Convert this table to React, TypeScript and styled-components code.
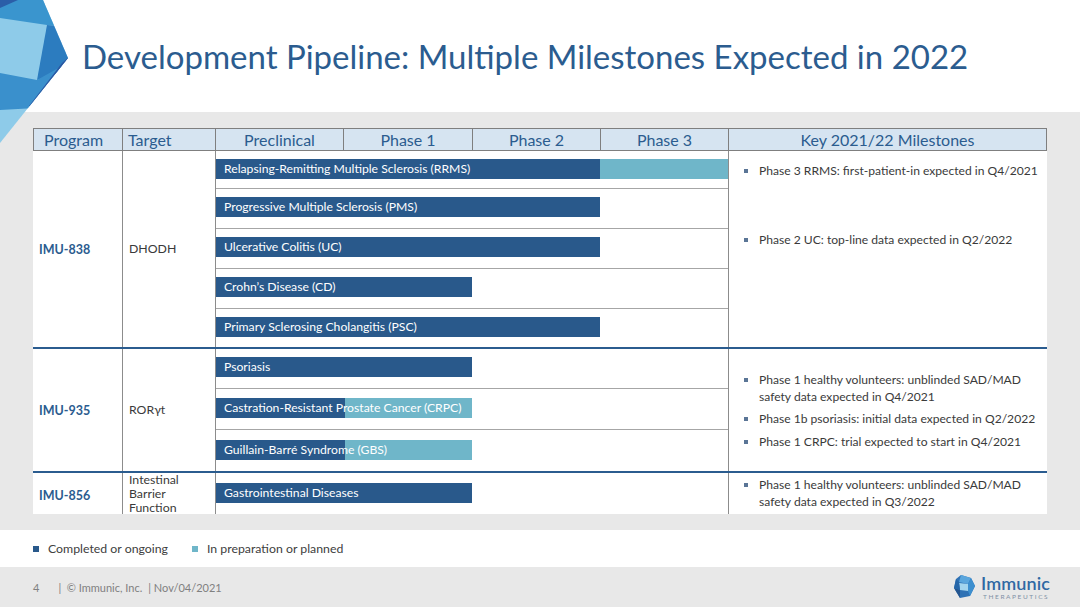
import React from "react";
import styled, { createGlobalStyle } from "styled-components";

const COLS = "89px 93px 128px 129px 128px 128px 319px";
const DARK = "#29598b";
const LIGHT = "#6fb6c9";
const BLUE_TEXT = "#2b5c8f";
const RULE = "#8c8c8c";

const GlobalStyle = createGlobalStyle`
  html, body { margin: 0; padding: 0; background: #fff; }
  body { font-family: Lato, "Open Sans", "Liberation Sans", sans-serif; }
  #root { width: 1080px; height: 607px; }
`;

const Slide = styled.div`
  position: relative;
  width: 1080px;
  height: 607px;
  overflow: hidden;
  display: flex;
  flex-direction: column;
  background: #fff;
`;

const Deco = styled.svg`
  position: absolute;
  left: 0;
  top: 0;
  z-index: 2;
`;

const TitleBar = styled.header`
  height: 112px;
  flex: none;
  box-sizing: border-box;
  padding: 36px 0 0 82px;
`;

const Title = styled.h1`
  margin: 0;
  font-size: 33px;
  line-height: 40px;
  font-weight: 400;
  color: ${BLUE_TEXT};
  letter-spacing: 0;
  white-space: nowrap;
`;

const Stage = styled.main`
  height: 418px;
  flex: none;
  box-sizing: border-box;
  background: #e8e8e8;
  padding: 16px 33px 0;
`;

const Table = styled.div`
  height: 386px;
  overflow: hidden;
  background: #fff;
  display: flex;
  flex-direction: column;
`;

const HeaderRow = styled.div`
  display: grid;
  grid-template-columns: ${COLS};
  height: 23px;
  flex: none;
`;

const HeadCell = styled.div<{ $align?: string; $pad?: number; $last?: boolean }>`
  box-sizing: border-box;
  background: #d6e4f1;
  border-top: 1px solid #7f7f7f;
  border-bottom: 1px solid #7f7f7f;
  border-left: 1px solid #7f7f7f;
  border-right: ${(p) => (p.$last ? "1px solid #7f7f7f" : "none")};
  display: flex;
  align-items: center;
  justify-content: ${(p) => p.$align ?? "center"};
  padding-left: ${(p) => p.$pad ?? 0}px;
  padding-bottom: 1px;
  font-size: 16px;
  color: ${BLUE_TEXT};
  white-space: nowrap;
`;

const Group = styled.section<{ $divider?: boolean; $height: number }>`
  display: grid;
  grid-template-columns: ${COLS};
  flex: none;
  height: ${(p) => p.$height}px;
  border-top: ${(p) => (p.$divider ? `2px solid ${BLUE_TEXT}` : "none")};
`;

const ProgramCell = styled.div`
  display: flex;
  align-items: center;
  padding-left: 6px;
  font-size: 12.5px;
  font-weight: 700;
  color: ${BLUE_TEXT};
`;

const TargetCell = styled.div<{ $top?: boolean }>`
  border-left: 1px solid ${RULE};
  display: flex;
  align-items: ${(p) => (p.$top ? "flex-start" : "center")};
  padding-left: 6px;
  font-size: 12.3px;
  line-height: 14px;
  color: #3a3a3a;
`;

const BarsCell = styled.div`
  grid-column: span 4;
  border-left: 1px solid ${RULE};
  display: flex;
  flex-direction: column;
`;

const BarRow = styled.div<{ $h: number; $pad: number; $first: boolean }>`
  box-sizing: border-box;
  height: ${(p) => p.$h}px;
  flex: none;
  padding-top: ${(p) => p.$pad}px;
  border-top: ${(p) => (p.$first ? "none" : "1px solid #a6a6a6")};
`;

const Bar = styled.div<{ $done: number; $total: number }>`
  box-sizing: border-box;
  width: ${(p) => p.$total}px;
  height: 20px;
  padding-left: 8px;
  background: linear-gradient(
    to right,
    ${DARK} 0,
    ${DARK} ${(p) => p.$done}px,
    ${LIGHT} ${(p) => p.$done}px,
    ${LIGHT} 100%
  );
  color: #fff;
  font-size: 12.2px;
  line-height: 20px;
  white-space: nowrap;
`;

const Milestones = styled.ul<{ $center?: boolean; $pt: number }>`
  list-style: none;
  margin: 0;
  box-sizing: border-box;
  border-left: 1px solid ${RULE};
  padding: ${(p) => p.$pt}px 0 0 15px;
  display: flex;
  flex-direction: column;
  justify-content: ${(p) => (p.$center ? "center" : "flex-start")};
`;

const Milestone = styled.li<{ $mt: number }>`
  display: flex;
  align-items: flex-start;
  gap: 11px;
  margin-top: ${(p) => p.$mt}px;
  font-size: 12.1px;
  line-height: 17px;
  color: #3a3a3a;
`;

const Bullet = styled.span<{ $color: string; $size?: number; $mt?: number }>`
  flex: none;
  width: ${(p) => p.$size ?? 4}px;
  height: ${(p) => p.$size ?? 4}px;
  margin-top: ${(p) => p.$mt ?? 7}px;
  background: ${(p) => p.$color};
`;

const LegendBand = styled.div`
  height: 37px;
  flex: none;
  display: flex;
  align-items: center;
  padding-left: 33px;
  gap: 24px;
  background: #fff;
`;

const LegendItem = styled.div`
  display: flex;
  align-items: center;
  gap: 9px;
  font-size: 12.3px;
  color: #404040;
`;

const Footer = styled.footer`
  height: 40px;
  flex: none;
  background: #e8e8e8;
  display: flex;
  align-items: center;
  justify-content: space-between;
  padding: 0 30px 0 33px;
`;

const FooterText = styled.div`
  display: flex;
  align-items: center;
  font-size: 11px;
  color: #808080;
`;

const FooterPart = styled.span<{ $mr: number }>`
  margin-right: ${(p) => p.$mr}px;
  white-space: pre;
`;

const Logo = styled.div`
  display: flex;
  align-items: center;
  gap: 5px;
`;

const LogoWords = styled.div`
  display: flex;
  flex-direction: column;
  align-items: flex-start;
`;

const LogoName = styled.span`
  font-size: 18px;
  line-height: 17px;
  font-weight: 600;
  color: #2f68a3;
  letter-spacing: 0.1px;
`;

const LogoTag = styled.span`
  font-size: 6.5px;
  line-height: 7px;
  margin-top: 1px;
  letter-spacing: 1.6px;
  color: #7f90a6;
  padding-left: 2px;
`;

type BarSpec = { label: string; done: number; total: number; h: number; pad: number };
type MilestoneSpec = { text: string; mt: number };
type GroupSpec = {
  program: string;
  target: string;
  targetTop?: boolean;
  height: number;
  bars: BarSpec[];
  milestones: MilestoneSpec[];
  center?: boolean;
  pt: number;
};

const groups: GroupSpec[] = [
  {
    program: "IMU-838",
    target: "DHODH",
    height: 196,
    bars: [
      { label: "Relapsing-Remitting Multiple Sclerosis (RRMS)", done: 384, total: 512, h: 37, pad: 8 },
      { label: "Progressive Multiple Sclerosis (PMS)", done: 384, total: 384, h: 40, pad: 8 },
      { label: "Ulcerative Colitis (UC)", done: 384, total: 384, h: 40, pad: 8 },
      { label: "Crohn’s Disease (CD)", done: 256, total: 256, h: 40, pad: 8 },
      { label: "Primary Sclerosing Cholangitis (PSC)", done: 384, total: 384, h: 39, pad: 8 },
    ],
    milestones: [
      { text: "Phase 3 RRMS: first-patient-in expected in Q4/2021", mt: 0 },
      { text: "Phase 2 UC: top-line data expected in Q2/2022", mt: 52 },
    ],
    pt: 11,
  },
  {
    program: "IMU-935",
    target: "RORγt",
    height: 122,
    bars: [
      { label: "Psoriasis", done: 256, total: 256, h: 39, pad: 8 },
      { label: "Castration-Resistant Prostate Cancer (CRPC)", done: 129, total: 256, h: 41, pad: 9 },
      { label: "Guillain-Barré Syndrome (GBS)", done: 129, total: 256, h: 42, pad: 10 },
    ],
    milestones: [
      { text: "Phase 1 healthy volunteers: unblinded SAD/MAD safety data expected in Q4/2021", mt: 0 },
      { text: "Phase 1b psoriasis: initial data expected in Q2/2022", mt: 5 },
      { text: "Phase 1 CRPC: trial expected to start in Q4/2021", mt: 6 },
    ],
    center: true,
    pt: 0,
  },
  {
    program: "IMU-856",
    target: "Intestinal Barrier Function",
    targetTop: true,
    height: 44,
    bars: [{ label: "Gastrointestinal Diseases", done: 256, total: 256, h: 44, pad: 10 }],
    milestones: [
      { text: "Phase 1 healthy volunteers: unblinded SAD/MAD safety data expected in Q3/2022", mt: 0 },
    ],
    pt: 3,
  },
];

function CornerDeco() {
  return (
    <Deco width="70" height="150" viewBox="0 0 70 150">
      <defs>
        <clipPath id="corner-clip">
          <polygon points="0,0 43,0 68,58 0,143" />
        </clipPath>
      </defs>
      <g clipPath="url(#corner-clip)">
        <rect x="0" y="0" width="70" height="150" fill="#8ecbe9" />
        <polygon points="0,0 70,0 70,27 47,25 0,18" fill="#3a95ce" />
        <polygon points="0,0 18,0 0,8" fill="#2b5ea8" />
        <polygon points="47,25 70,27 70,70 37,80" fill="#2c7cbf" />
        <polygon points="0,73 37,80 62,66 36,108 0,110" fill="#3a90cc" />
        <polygon points="70,56 62,63 29,106 35,106" fill="#2c55a0" />
      </g>
    </Deco>
  );
}

function LogoMark() {
  return (
    <svg width="22" height="24" viewBox="0 0 22 24">
      <polygon points="7,0 17,3 21,11 16,21 6,23 0,13 2,4" fill="#2f72b5" />
      <polygon points="7,0 17,3 14,9 5,7" fill="#5aa6dd" />
      <polygon points="17,3 21,11 16,21 14,16 14,9" fill="#3d8fcf" />
      <polygon points="5,8 14,9 14,16 6,15" fill="#a3d4ee" />
      <polygon points="0,13 6,15 6,23" fill="#23558f" />
      <polygon points="2,4 5,7 6,15 0,13" fill="#2566a8" />
    </svg>
  );
}

export default function App() {
  return (
    <>
      <GlobalStyle />
      <Slide>
        <CornerDeco />
        <TitleBar>
          <Title>Development Pipeline: Multiple Milestones Expected in 2022</Title>
        </TitleBar>
        <Stage>
          <Table>
            <HeaderRow>
              <HeadCell $align="flex-start" $pad={10}>Program</HeadCell>
              <HeadCell $align="flex-start" $pad={5}>Target</HeadCell>
              <HeadCell>Preclinical</HeadCell>
              <HeadCell>Phase 1</HeadCell>
              <HeadCell>Phase 2</HeadCell>
              <HeadCell>Phase 3</HeadCell>
              <HeadCell $last>Key 2021/22 Milestones</HeadCell>
            </HeaderRow>
            {groups.map((g, gi) => (
              <Group key={g.program} $divider={gi > 0} $height={g.height}>
                <ProgramCell>{g.program}</ProgramCell>
                <TargetCell $top={g.targetTop}>{g.target}</TargetCell>
                <BarsCell>
                  {g.bars.map((b, bi) => (
                    <BarRow key={b.label} $h={b.h} $pad={b.pad} $first={bi === 0}>
                      <Bar $done={b.done} $total={b.total}>{b.label}</Bar>
                    </BarRow>
                  ))}
                </BarsCell>
                <Milestones $center={g.center} $pt={g.pt}>
                  {g.milestones.map((m) => (
                    <Milestone key={m.text} $mt={m.mt}>
                      <Bullet $color="#5a7596" />
                      <span>{m.text}</span>
                    </Milestone>
                  ))}
                </Milestones>
              </Group>
            ))}
          </Table>
        </Stage>
        <LegendBand>
          <LegendItem>
            <Bullet $color={DARK} $size={6} $mt={0} />
            Completed or ongoing
          </LegendItem>
          <LegendItem>
            <Bullet $color={LIGHT} $size={6} $mt={0} />
            In preparation or planned
          </LegendItem>
        </LegendBand>
        <Footer>
          <FooterText>
            <FooterPart $mr={19}>4</FooterPart>
            <FooterPart $mr={6}>|  © Immunic, Inc.</FooterPart>
            <FooterPart $mr={0}>| Nov/04/2021</FooterPart>
          </FooterText>
          <Logo>
            <LogoMark />
            <LogoWords>
              <LogoName>Immunic</LogoName>
              <LogoTag>THERAPEUTICS</LogoTag>
            </LogoWords>
          </Logo>
        </Footer>
      </Slide>
    </>
  );
}
